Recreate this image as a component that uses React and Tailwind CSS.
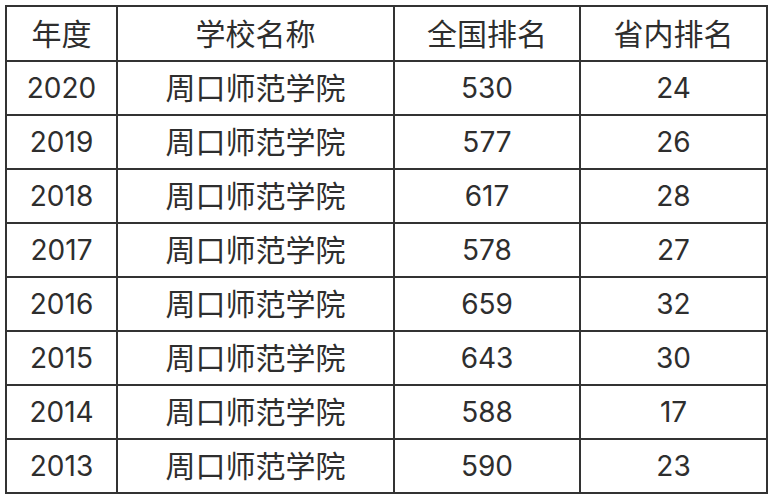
const ROWS = [
  ['2020', '530', '24'],
  ['2019', '577', '26'],
  ['2018', '617', '28'],
  ['2017', '578', '27'],
  ['2016', '659', '32'],
  ['2015', '643', '30'],
  ['2014', '588', '17'],
  ['2013', '590', '23'],
];

const cell = 'border-2 border-[#333] text-center align-middle p-0';
// CJK glyphs sit a bit low in the line box, lift them with bottom padding
const cjk = "font-['Noto_Sans_CJK_SC',sans-serif] text-[30px] pb-[4px]";

export default function App() {
  return (
    <div className="w-[771px] h-[502px] bg-white pt-[5px] pl-[5px] text-[#2e2e2e] font-['Inter','Noto_Sans_CJK_SC',sans-serif] text-[28px] leading-none">
      <table className="table-fixed border-collapse w-[761px]">
        <colgroup>
          <col className="w-[111px]" />
          <col className="w-[277px]" />
          <col className="w-[186px]" />
          <col className="w-[187px]" />
        </colgroup>
        <thead>
          <tr className="h-[55px]">
            <th className={`${cell} ${cjk} font-normal`}>年度</th>
            <th className={`${cell} ${cjk} font-normal`}>学校名称</th>
            <th className={`${cell} ${cjk} font-normal`}>全国排名</th>
            <th className={`${cell} ${cjk} font-normal`}>省内排名</th>
          </tr>
        </thead>
        <tbody>
          {ROWS.map(([year, nat, prov]) => (
            <tr key={year} className="h-[54px]">
              <td className={cell}>{year}</td>
              <td className={`${cell} ${cjk}`}>周口师范学院</td>
              <td className={cell}>{nat}</td>
              <td className={cell}>{prov}</td>
            </tr>
          ))}
        </tbody>
      </table>
    </div>
  );
}
